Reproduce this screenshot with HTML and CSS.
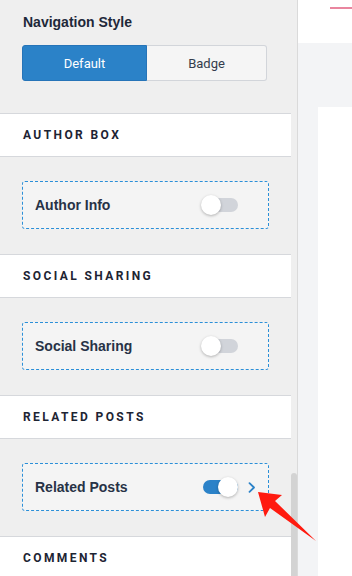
FILE: index.html
```html
<!DOCTYPE html>
<html lang="en">
<head>
<meta charset="utf-8">
<title>Customizer</title>
<link rel="stylesheet" href="styles.css">
</head>
<body>
<div class="app">
  <aside class="sidebar">
    <div class="sidebar-content">
      <div class="field">
        <div class="field-label">Navigation Style</div>
        <div class="segmented">
          <button class="seg seg-active">Default</button>
          <button class="seg">Badge</button>
        </div>
      </div>

      <div class="section-head">AUTHOR BOX</div>
      <div class="section-body">
        <div class="card">
          <span class="card-label">Author Info</span>
          <span class="toggle"><span class="knob"></span></span>
          <span class="chev-slot"></span>
        </div>
      </div>

      <div class="section-head">SOCIAL SHARING</div>
      <div class="section-body">
        <div class="card">
          <span class="card-label">Social Sharing</span>
          <span class="toggle"><span class="knob"></span></span>
          <span class="chev-slot"></span>
        </div>
      </div>

      <div class="section-head">RELATED POSTS</div>
      <div class="section-body">
        <div class="card">
          <span class="card-label">Related Posts</span>
          <span class="toggle toggle-on"><span class="knob"></span></span>
          <span class="chev-slot">
            <svg class="chev" width="8" height="11" viewBox="0 0 8 11"><path d="M1.5 1.2 L6 5.5 L1.5 9.8" fill="none" stroke="#2b82c8" stroke-width="1.8" stroke-linecap="round" stroke-linejoin="round"/></svg>
          </span>
        </div>
      </div>

      <div class="section-head">COMMENTS</div>
    </div>
    <div class="scrollbar"><div class="thumb"></div></div>
  </aside>
  <main class="main">
    <div class="topbar"><div class="accent"></div></div>
    <div class="canvas"><div class="page"></div></div>
  </main>
</div>
<svg class="arrow" width="352" height="576" viewBox="0 0 352 576">
  <polygon points="258,492 282,495 275,501 316,541 270,508 265,517" fill="#ff1a0f"/>
</svg>
</body>
</html>
```

FILE: styles.css
```css
* { box-sizing: border-box; }
html, body { margin: 0; padding: 0; }
body {
  width: 352px;
  height: 576px;
  overflow: hidden;
  font-family: Roboto, "Liberation Sans", Arial, sans-serif;
  color: #1f2a3c;
  background: #ffffff;
  position: relative;
}
.app {
  display: flex;
  height: 576px;
}
.sidebar {
  width: 298px;
  flex: none;
  display: flex;
  background: #efefef;
  border-right: 1px solid #dadada;
}
.sidebar-content {
  width: 291px;
  flex: none;
}
.scrollbar {
  width: 6px;
  flex: none;
}
.thumb {
  margin-top: 473px;
  height: 120px;
  background: #d3d3d3;
  border-radius: 3px 3px 0 0;
}
.field {
  padding: 12px 0 32px 22px;
}
.field-label {
  font-family: "Liberation Sans", Arial, sans-serif;
  font-size: 14px;
  line-height: 20px;
  font-weight: 700;
  padding-left: 1px;
  color: #1e2839;
}
.segmented {
  display: flex;
  margin-top: 13px;
  width: 245px;
  height: 36px;
}
.seg {
  font-family: inherit;
  font-size: 13px;
  border: 1px solid #d2d5da;
  background: #f5f5f5;
  color: #343d4c;
  width: 120px;
  padding: 0;
  border-left: none;
  border-radius: 0 3px 3px 0;
}
.seg-active {
  width: 125px;
  background: #2b82c8;
  border: 1px solid #2674b8;
  color: #ffffff;
  border-radius: 3px 0 0 3px;
}
.section-head {
  height: 44px;
  background: #ffffff;
  border-top: 1px solid #d6d8dc;
  border-bottom: 1px solid #d6d8dc;
  padding-left: 23px;
  font-size: 12px;
  font-weight: 700;
  letter-spacing: 2.4px;
  line-height: 42px;
  color: #1d2433;
}
.section-body {
  padding: 24px 22px 25px 22px;
}
.card {
  height: 48px;
  border: 1px dashed #2b8fd8;
  border-radius: 3px;
  background: #f4f4f4;
  display: flex;
  align-items: center;
  padding: 0 12px 0 12px;
}
.card-label {
  flex: 1;
  font-family: "Liberation Sans", Arial, sans-serif;
  font-size: 14px;
  font-weight: 700;
  color: #273246;
}
.toggle {
  position: relative;
  width: 35px;
  height: 14px;
  border-radius: 7px;
  background: #d1d4da;
  flex: none;
}
.knob {
  position: absolute;
  left: -2px;
  top: -3px;
  width: 20px;
  height: 20px;
  border-radius: 50%;
  background: #ffffff;
  box-shadow: 0 1px 3px rgba(0,0,0,0.28);
}
.toggle-on { background: #2b82c8; }
.toggle-on .knob { left: 15px; }
.chev-slot {
  width: 18px;
  flex: none;
  display: flex;
  justify-content: flex-end;
}
.chev { display: block; }
.main {
  flex: 1;
  display: flex;
  flex-direction: column;
}
.topbar {
  height: 43px;
  background: #ffffff;
  padding: 7px 0 0 32px;
}
.accent {
  height: 2px;
  background: #e9869f;
}
.canvas {
  flex: 1;
  background: #f3f4f6;
  padding: 64px 0 0 20px;
}
.page {
  background: #ffffff;
  height: 100%;
}
.arrow {
  position: absolute;
  left: 0;
  top: 0;
  pointer-events: none;
}
```
